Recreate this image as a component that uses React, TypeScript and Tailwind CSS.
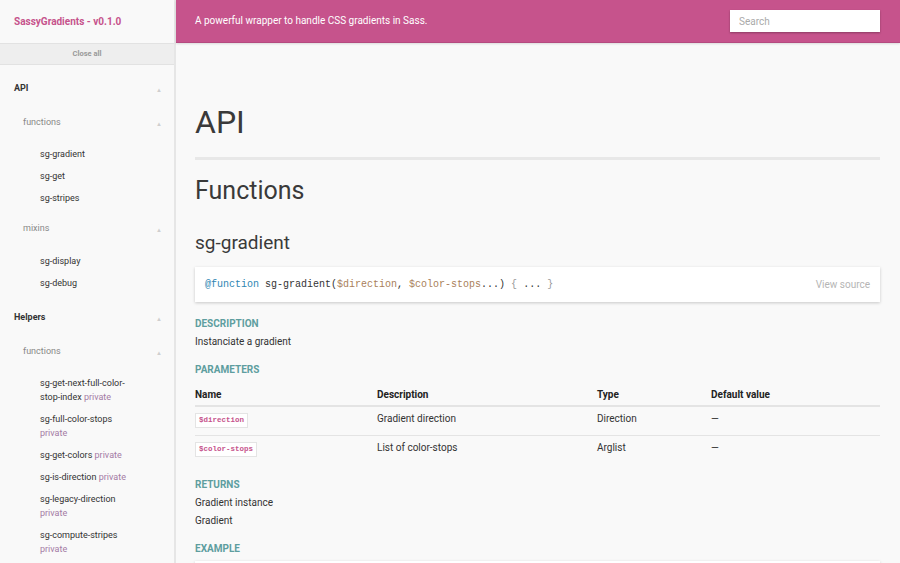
const Tri = () => <span className="text-[6px] text-[#cfcfcf]">▲</span>

const GroupTitle = ({ label, className }: { label: string; className?: string }) => (
  <div className={`flex h-[22px] items-center justify-between pl-[14px] pr-[12px] ${className ?? ''}`}>
    <span className="text-[9px] font-bold text-[#333]">{label}</span>
    <Tri />
  </div>
)

const SubTitle = ({ label, className }: { label: string; className?: string }) => (
  <div className={`flex h-[22px] items-center justify-between pl-[23px] pr-[12px] ${className ?? ''}`}>
    <span className="text-[9px] text-[#888]">{label}</span>
    <Tri />
  </div>
)

const Item = ({ name, priv }: { name: string; priv?: boolean }) => (
  <li className="py-[4px] pl-[40px] pr-[39px] text-[9px] leading-[14px] text-[#333]">
    {name}
    {priv && <span className="text-[#a47ba5]"> private</span>}
  </li>
)

const Label = ({ children, className }: { children: string; className?: string }) => (
  <h4 className={`text-[10px] font-bold uppercase leading-[14px] text-[#5e9e9f] ${className ?? ''}`}>{children}</h4>
)

const Badge = ({ children }: { children: string }) => (
  <code className="inline-block border border-[#e4e4e4] bg-white px-[3px] font-['Liberation_Mono',monospace] text-[7.5px] font-bold leading-[13px] text-[#c6538c]">
    {children}
  </code>
)

const params = [
  { name: '$direction', desc: 'Gradient direction', type: 'Direction' },
  { name: '$color-stops', desc: 'List of color-stops', type: 'Arglist' },
]

export default function App() {
  return (
    <div className="flex h-[563px] w-[900px] overflow-hidden bg-[#f9f9f9] font-['Roboto',sans-serif]">
      <aside className="block w-[176px] shrink-0 overflow-hidden border-r-2 border-[#e6e6e6] bg-[#f9f9f9]">
        <div className="flex h-[43px] items-center pl-[14px] text-[10px] font-bold text-[#c6538c]">
          SassyGradients - v0.1.0
        </div>
        <div className="flex h-[22px] items-center justify-center border-y border-[#e2e2e2] bg-[#eeeeee] text-[7.5px] font-bold text-[#999]">
          Close all
        </div>

        <GroupTitle label="API" className="mt-[13px]" />
        <SubTitle label="functions" className="mt-[12px]" />
        <ul className="mt-[9px]">
          <Item name="sg-gradient" />
          <Item name="sg-get" />
          <Item name="sg-stripes" />
        </ul>
        <SubTitle label="mixins" className="mt-[9px]" />
        <ul className="mt-[10px]">
          <Item name="sg-display" />
          <Item name="sg-debug" />
        </ul>

        <GroupTitle label="Helpers" className="mt-[13px]" />
        <SubTitle label="functions" className="mt-[12px]" />
        <ul className="mt-[9px]">
          <Item name="sg-get-next-full-color-stop-index" priv />
          <Item name="sg-full-color-stops" priv />
          <Item name="sg-get-colors" priv />
          <Item name="sg-is-direction" priv />
          <Item name="sg-legacy-direction" priv />
          <Item name="sg-compute-stripes" priv />
        </ul>
      </aside>

      <div className="flex min-w-0 flex-1 flex-col">
        <header className="flex h-[43px] shrink-0 items-center justify-between border-b border-[#b54a80] bg-[#c6538c] pl-[19px] pr-[20px] shadow-[0_1px_2px_rgba(0,0,0,0.12)]">
          <p className="-mt-[2px] text-[10px] text-white">A powerful wrapper to handle CSS gradients in Sass.</p>
          <input
            placeholder="Search"
            className="h-[22px] w-[150px] bg-white px-[9px] text-[10px] text-[#333] shadow-[0_1px_2px_rgba(0,0,0,0.3)] outline-none placeholder:text-[#aaa]"
          />
        </header>

        <main className="shrink-0 pl-[19px] pr-[20px] pt-[59px] text-[#333]">
          <h1 className="text-[32px] font-normal leading-[40px] text-[#3a3a3a]">API</h1>
          <div className="mt-[15px] h-[3px] bg-[#e8e8e8]" />
          <h2 className="mt-[15px] text-[25px] leading-[32px] text-[#3a3a3a]">Functions</h2>
          <h3 className="mt-[23px] text-[19px] leading-[26px] text-[#3a3a3a]">sg-gradient</h3>

          <div className="mt-[11px] flex h-[35px] items-center justify-between bg-white px-[10px] shadow-[0_1px_3px_rgba(0,0,0,0.2)]">
            <code className="font-['Liberation_Mono',monospace] text-[10px] text-[#333]">
              <span className="text-[#2f86b3]">@function</span> sg-gradient(
              <span className="text-[#a9805a]">$direction</span>,{' '}
              <span className="text-[#a9805a]">$color-stops</span>...) <span className="text-[#999]">{'{'}</span> ...{' '}
              <span className="text-[#999]">{'}'}</span>
            </code>
            <span className="text-[10px] text-[#b5b5b5]">View source</span>
          </div>

          <Label className="mt-[15px]">Description</Label>
          <p className="mt-[3px] text-[10px] leading-[16px]">Instanciate a gradient</p>

          <Label className="mt-[13px]">Parameters</Label>
          <div className="mt-[6px] text-[10px]">
            <div className="grid h-[24px] grid-cols-[182px_220px_114px_1fr] items-center border-b-2 border-[#e4e4e4] font-bold text-[#222]">
              <span>Name</span>
              <span>Description</span>
              <span>Type</span>
              <span>Default value</span>
            </div>
            {params.map((p, i) => (
              <div
                key={p.name}
                className={`grid h-[29px] grid-cols-[182px_220px_114px_1fr] items-start pt-[4px] leading-[16px] ${i === 0 ? 'border-b border-[#e4e4e4]' : ''}`}
              >
                <span>
                  <Badge>{p.name}</Badge>
                </span>
                <span>{p.desc}</span>
                <span>{p.type}</span>
                <span>—</span>
              </div>
            ))}
          </div>

          <Label className="mt-[13px]">Returns</Label>
          <p className="mt-[3px] text-[10px] leading-[16px]">Gradient instance</p>
          <p className="mt-[2px] text-[10px] leading-[16px]">Gradient</p>

          <Label className="mt-[13px]">Example</Label>
          <div className="mt-[5px] h-[40px] bg-white shadow-[0_1px_3px_rgba(0,0,0,0.2)]" />
        </main>
      </div>
    </div>
  )
}
